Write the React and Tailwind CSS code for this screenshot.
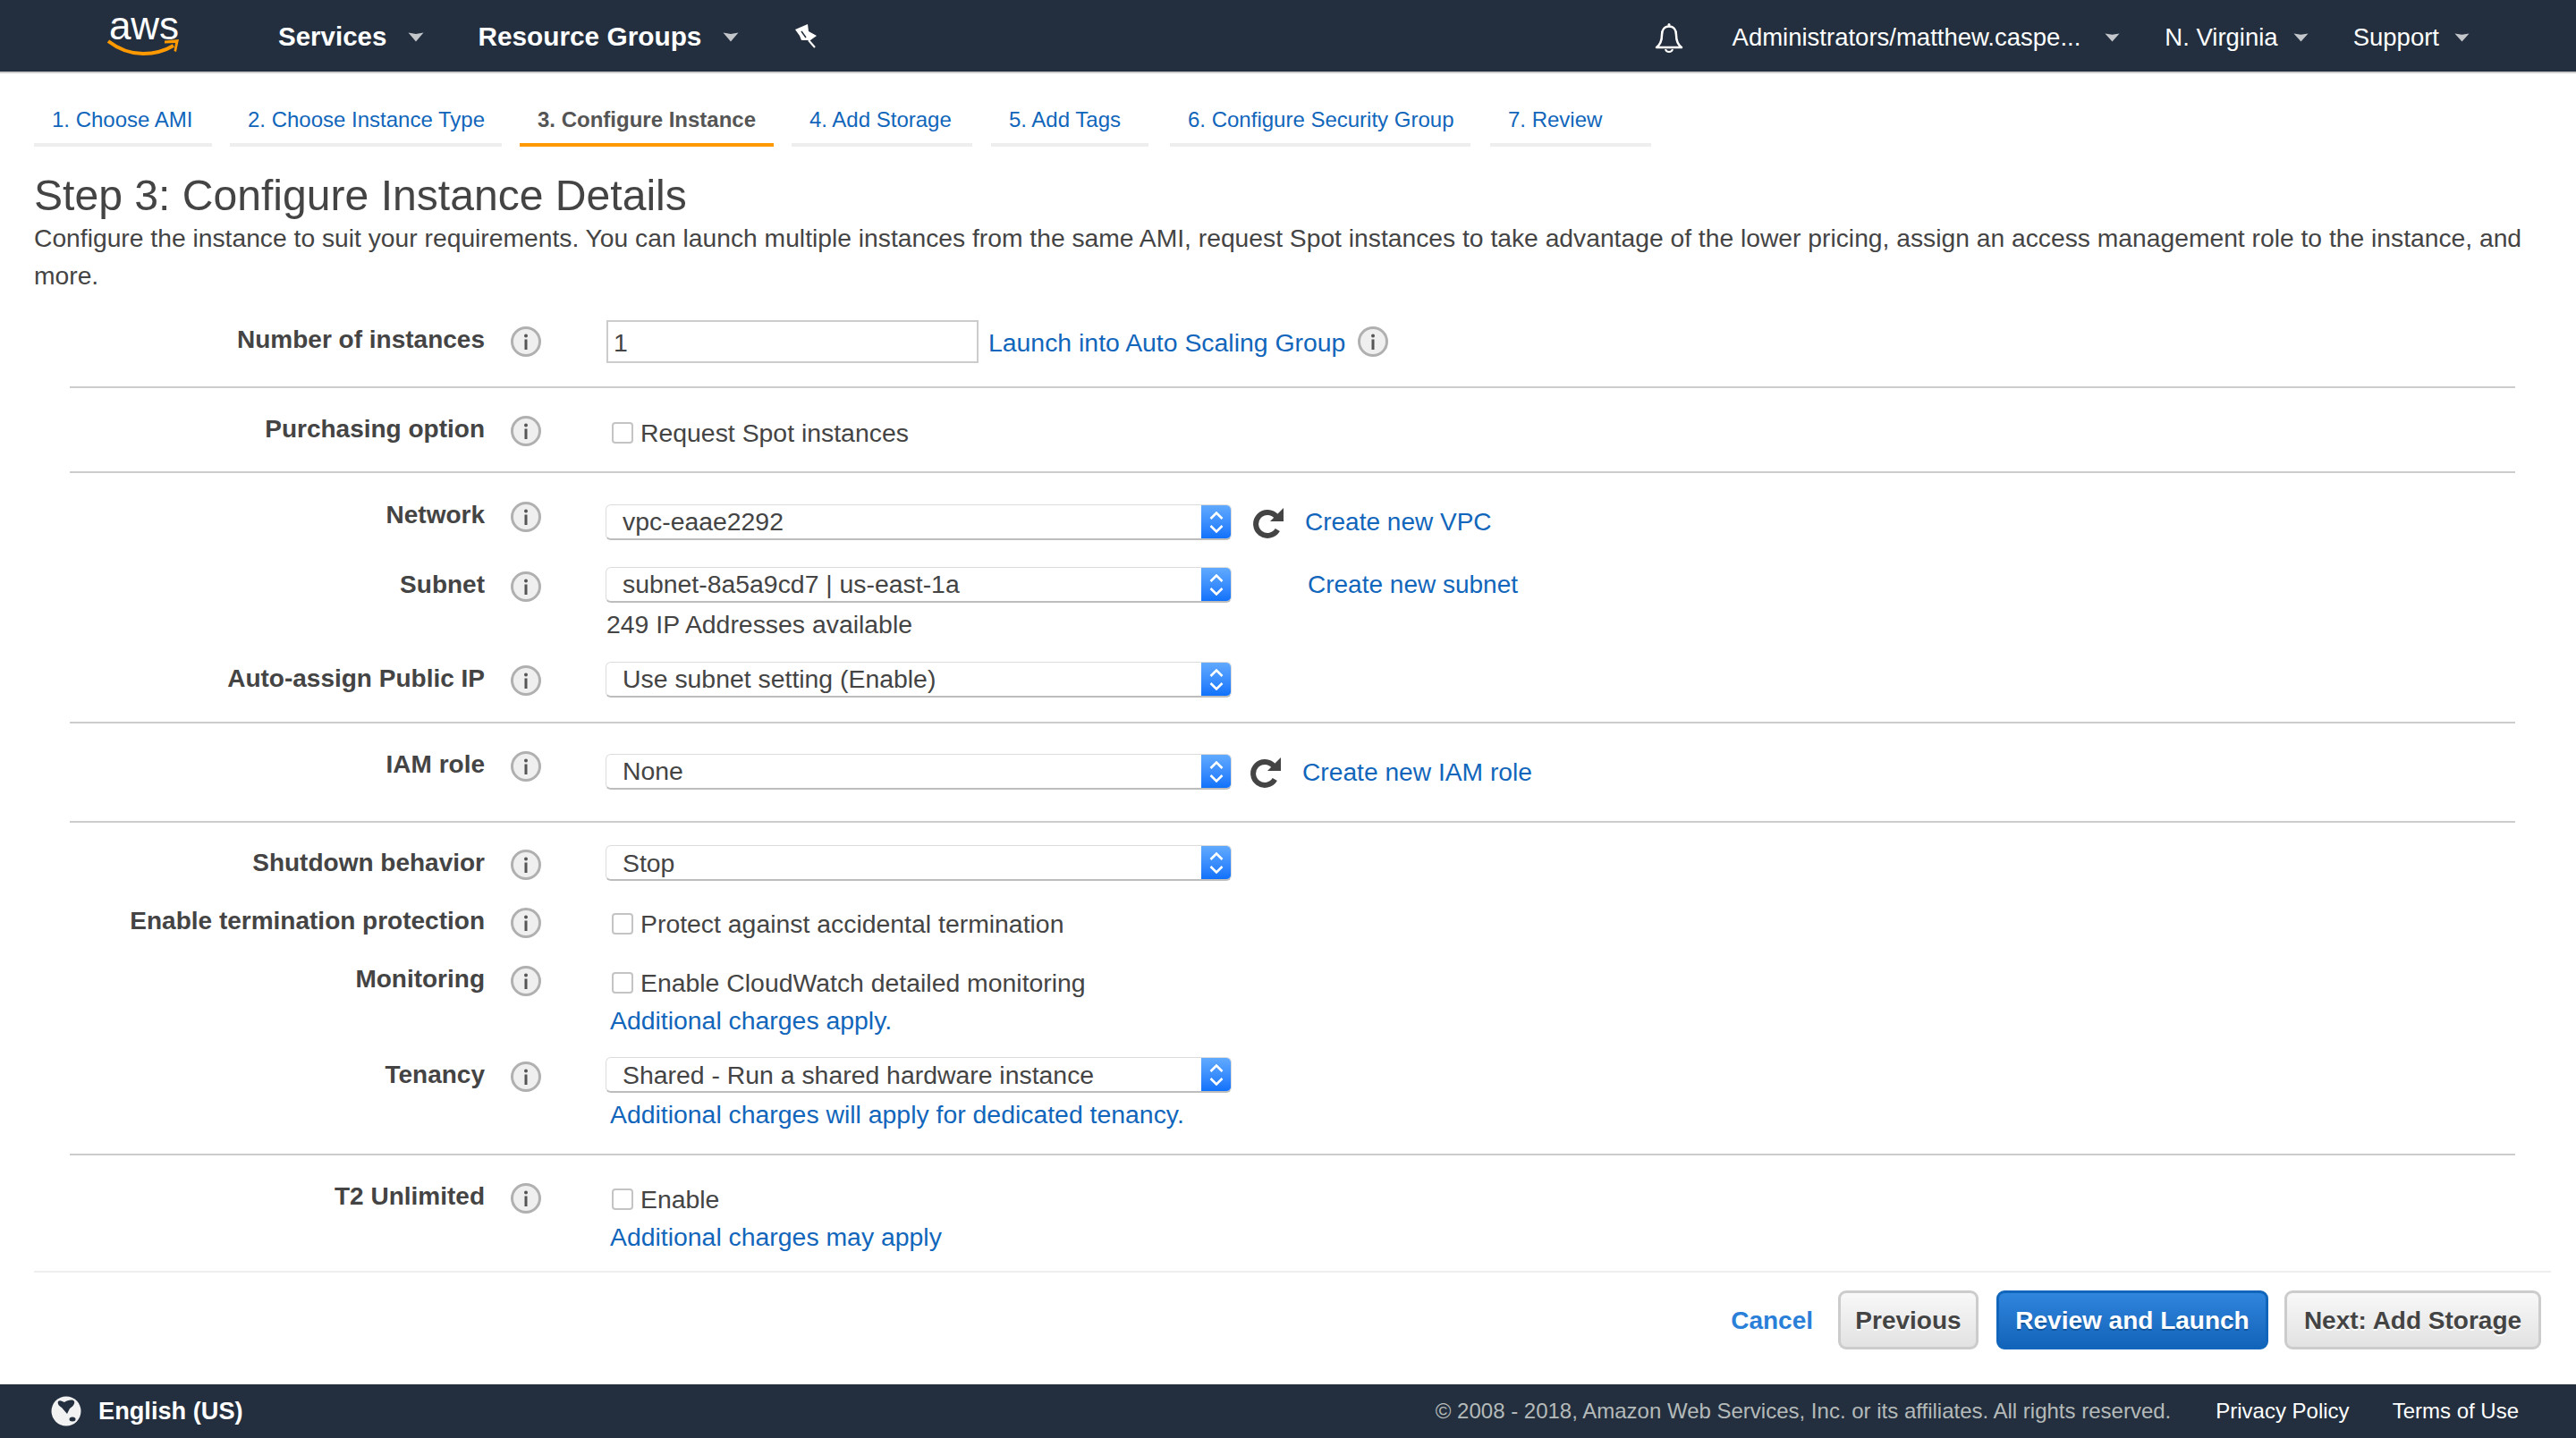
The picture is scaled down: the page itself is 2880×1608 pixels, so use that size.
import React from "react";

const Caret = ({ w = 17, h = 10 }) => (
  <svg width={w} height={h} viewBox="0 0 18 11" preserveAspectRatio="none" className="shrink-0">
    <path d="M.5.5 9 2 17.500.5 9 10.500z" fill="#c3c6ca" />
  </svg>
);

const Info = () => (
  <svg width="34" height="34" viewBox="0 0 34 34" className="shrink-0">
    <circle cx="17" cy="17" r="15.500" fill="#efefef" stroke="#b0b0b0" strokeWidth="3" />
    <circle cx="17" cy="10.500" r="2" fill="#555" />
    <rect x="15.500" y="14.500" width="3" height="11.500" fill="#555" />
  </svg>
);

const Refresh = () => (
  <svg width="36" height="36" viewBox="0 0 36 36" className="shrink-0">
    <path d="M28.300 26.500A13 13 0 1 1 27 11.500" fill="none" stroke="#444" strokeWidth="6" />
    <path d="M35 2v15H20z" fill="#444" />
  </svg>
);

const Check = ({ children }) => (
  <label className="flex items-center h-[34px]">
    <span className="w-[24px] h-[24px] ml-[6px] mr-[8px] rounded-[4px] border-2 border-[#c4c4c4] bg-white shrink-0" />
    {children}
  </label>
);

const A = ({ children, className = "" }) => (
  <a className={`text-[#1166bb] ${className}`}>{children}</a>
);

const Select = ({ value }) => (
  <div className="flex w-[700px] -ml-[1px] h-[40px] rounded-[6px] bg-white border border-[#dcdcdc] border-b-2 border-b-[#bdbdbd] overflow-hidden">
    <div className="flex-1 flex items-center pl-[18px]">{value}</div>
    <div className="w-[33px] -my-[1px] flex items-center justify-center bg-gradient-to-b from-[#62abff] to-[#0b70fb]">
      <svg width="16" height="24" viewBox="0 0 16 24">
        <path d="M1.500 8 8 1.500 14.500 8M1.500 16 8 22.500 14.500 16" fill="none" stroke="#fff" strokeWidth="2.500" />
      </svg>
    </div>
  </div>
);

const Row = ({ label, lc = "", fc = "", className = "", children }) => (
  <div className={`flex ${className}`}>
    <div className={`flex items-center h-[36px] shrink-0 ${lc}`}>
      <div className="w-[464px] text-right text-[28px] font-bold mb-[4px] leading-none">{label}</div>
      <div className="ml-[29px] mr-[73px]"><Info /></div>
    </div>
    <div className={`flex-1 ${fc}`}>{children}</div>
  </div>
);

const Section = ({ className = "", children }) => (
  <div className={`border-b-2 border-[#cccccc] ${className}`}>{children}</div>
);

const Tab = ({ children, active, className = "" }) => (
  <div
    className={`h-[50px] border-b-4 pl-[20px] pt-[2px] whitespace-nowrap ${
      active ? "border-[#ff9900] text-[#555] font-bold" : "border-[#eeeeee] text-[#1166bb]"
    } ${className}`}
  >
    {children}
  </div>
);

const Btn = ({ className = "", children }) => (
  <button
    className={`h-[66px] pt-[1px] rounded-[9px] border-[3px] font-bold flex items-center justify-center ${className}`}
  >
    {children}
  </button>
);

export default function App() {
  return (
    <div className="min-h-screen flex flex-col bg-white text-[#444] text-[28.4px] font-['Liberation_Sans',Arial,sans-serif]">
      {/* top nav */}
      <header className="h-[82px] pt-[3px] bg-[#232f3e] border-b-2 border-[#cccccc] flex items-center text-white text-[27.5px] shrink-0">
        <div className="ml-[120px] w-[82px] h-[47px] -mt-[5px] flex flex-col items-center">
          <span className="text-[44px] leading-[30px] font-normal -mt-[2px]">aws</span>
          <svg width="82" height="19" viewBox="0 0 82 19" className="-mt-[1px]">
            <path d="M1 3C14 13 26 17 40 17c13 0 24-3 34-9" fill="none" stroke="#ff9900" strokeWidth="4" />
            <path d="M64 2.500l16-1.500-3 14-2.500-1 1.500-9-12 .5z" fill="#ff9900" />
          </svg>
        </div>
        <span className="ml-[109px] font-bold text-[29.5px]">Services</span>
        <span className="ml-[24px]"><Caret w={18} h={11} /></span>
        <span className="ml-[60px] font-bold text-[29.8px]">Resource Groups</span>
        <span className="ml-[24px]"><Caret w={18} h={11} /></span>
        <svg width="30" height="30" viewBox="15 15 30 30" className="ml-[60px] mb-[3px]">
          <path d="M18 23 32 17l1 8 9 5-7 5H25l-2-5z" fill="#fff" />
          <path d="M33 35l7 8" stroke="#fff" strokeWidth="2" />
          <path d="M25 25l5 7" stroke="#232f3e" strokeWidth="1.500" />
        </svg>
        <div className="flex-1" />
        <svg width="34" height="36" viewBox="0 0 34 36" className="mr-[54px]">
          <circle cx="17" cy="3.500" r="1.500" fill="#fff" />
          <path d="M3 29C7 26 9 22 9 15 9 9 12 5.500 17 5.500S25 9 25 15C25 22 27 26 31 29Z" fill="none" stroke="#fff" strokeWidth="2.500" strokeLinejoin="round" />
          <path d="M13 31c1 4 7 4 8 0" fill="none" stroke="#fff" strokeWidth="2" />
        </svg>
        <span>Administrators/matthew.caspe...</span>
        <span className="ml-[27px]"><Caret /></span>
        <span className="ml-[50px]">N. Virginia</span>
        <span className="ml-[17px]"><Caret /></span>
        <span className="ml-[50px]">Support</span>
        <span className="ml-[17px] mr-[119px]"><Caret /></span>
      </header>

      {/* wizard tabs */}
      <nav className="flex pl-[38px] mt-[32px] text-[24px]">
        <Tab className="w-[199px]">1. Choose AMI</Tab>
        <Tab className="w-[304px] ml-[20px]">2. Choose Instance Type</Tab>
        <Tab className="w-[284px] ml-[20px]" active>3. Configure Instance</Tab>
        <Tab className="w-[202px] ml-[20px]">4. Add Storage</Tab>
        <Tab className="w-[176px] ml-[21px]">5. Add Tags</Tab>
        <Tab className="w-[336px] ml-[24px]">6. Configure Security Group</Tab>
        <Tab className="w-[180px] ml-[22px]">7. Review</Tab>
      </nav>

      <main className="px-[38px]">
        <h1 className="text-[48.1px] leading-[56px] mt-[26px]">Step 3: Configure Instance Details</h1>
        <p className="text-[28.25px] leading-[42px] -mt-[1px] w-[2830px]">
          Configure the instance to suit your requirements. You can launch multiple instances from the same AMI, request Spot instances to take advantage of the lower pricing, assign an access management role to the instance, and more.
        </p>

        <form className="ml-[40px] mr-[30px]">
          <Section className="pt-[29px] pb-[26px]">
            <Row label="Number of instances" lc="mt-[6px]">
              <div className="flex items-center">
                <div className="w-[416px] h-[48px] border-2 border-[#cccccc] flex items-center pl-[6px] pt-[2px]">1</div>
                <A className="ml-[11px] mt-[2px]">Launch into Auto Scaling Group</A>
                <span className="ml-[14px]"><Info /></span>
              </div>
            </Row>
          </Section>

          <Section className="pt-[30px] pb-[26px]">
            <Row label="Purchasing option" fc="mt-[3px]">
              <Check>Request Spot instances</Check>
            </Row>
          </Section>

          <Section className="pt-[31px] pb-[27px]">
            <Row label="Network" fc="mt-[3px]">
              <div className="flex items-center">
                <Select value="vpc-eaae2292" />
                <span className="ml-[23px]"><Refresh /></span>
                <A className="ml-[23px] text-[28px]">Create new VPC</A>
              </div>
            </Row>
            <Row label="Subnet" lc="mt-[5px]" className="mt-[28px]">
              <div className="flex items-center">
                <Select value="subnet-8a5a9cd7 | us-east-1a" />
                <A className="ml-[85px] text-[28px]">Create new subnet</A>
              </div>
              <div className="mt-[6px] leading-[34px]">249 IP Addresses available</div>
            </Row>
            <Row label="Auto-assign Public IP" lc="mt-[3px]" className="mt-[25px]">
              <Select value="Use subnet setting (Enable)" />
            </Row>
          </Section>

          <Section className="pt-[29px] pb-[34px]">
            <Row label="IAM role" lc="mt-[1px]" fc="mt-[4px]">
              <div className="flex items-center">
                <Select value="None" />
                <span className="ml-[20px]"><Refresh /></span>
                <A className="ml-[23px] text-[28.2px]">Create new IAM role</A>
              </div>
            </Row>
          </Section>

          <Section className="pt-[25px] pb-[27px]">
            <Row label="Shutdown behavior" lc="mt-[4px]">
              <Select value="Stop" />
            </Row>
            <Row label="Enable termination protection" fc="mt-[2px]" className="mt-[29px]">
              <Check>Protect against accidental termination</Check>
            </Row>
            <Row label="Monitoring" fc="mt-[3px]" className="mt-[29px]">
              <Check>Enable CloudWatch detailed monitoring</Check>
              <A className="block mt-[8px] ml-[4px] leading-[34px]">Additional charges apply.</A>
            </Row>
            <Row label="Tenancy" lc="mt-[4px]" className="mt-[24px]">
              <Select value="Shared - Run a shared hardware instance" />
              <A className="block mt-[7px] ml-[4px] leading-[34px]">Additional charges will apply for dedicated tenancy.</A>
            </Row>
          </Section>

          <div className="pt-[30px]">
            <Row label="T2 Unlimited" fc="mt-[2px]">
              <Check>Enable</Check>
              <A className="block mt-[8px] ml-[4px] leading-[34px]">Additional charges may apply</A>
            </Row>
          </div>
        </form>
      </main>

      {/* wizard buttons */}
      <div className="ml-[38px] w-[2814px] mt-[21px] border-t-2 border-[#eeeeee] pt-[20px] flex items-center justify-end text-[28px]">
        <a className="text-[#2a7fd8] font-bold mr-[28px] pt-[2px]">Cancel</a>
        <Btn className="w-[157px] mr-[20px] border-[#cccccc] bg-gradient-to-b from-[#f8f8f8] to-[#e2e2e2] text-[#444] [text-shadow:0_2px_0_#fff]">Previous</Btn>
        <Btn className="w-[304px] mr-[18px] border-[#1166bb] bg-gradient-to-b from-[#3085dc] to-[#1264ba] text-white [text-shadow:0_2px_0_#10559c]">Review and Launch</Btn>
        <Btn className="w-[287px] mr-[11px] border-[#cccccc] bg-gradient-to-b from-[#f8f8f8] to-[#e2e2e2] text-[#444] [text-shadow:0_2px_0_#fff]">Next: Add Storage</Btn>
      </div>

      {/* footer */}
      <footer className="mt-auto h-[60px] bg-[#232f3e] flex items-center shrink-0 text-[24px] text-white">
        <svg width="34" height="34" viewBox="0 0 34 34" className="ml-[57px]">
          <circle cx="17" cy="17" r="16.500" fill="#f2f2f2" />
          <path d="M8 6C10 4 13 6 15 7 18 5 24 3 26 6 27 9 24 12 21 14 20 16 19 18 18 20 16 18 14 15 12 13 9 11 7 9 8 6Z" fill="#232f3e" />
          <ellipse cx="24" cy="26" rx="3.500" ry="2.500" fill="#232f3e" />
        </svg>
        <span className="ml-[19px] font-bold text-[27.2px]">English (US)</span>
        <div className="flex-1" />
        <span className="text-[#b4bab9]">© 2008 - 2018, Amazon Web Services, Inc. or its affiliates. All rights reserved.</span>
        <span className="ml-[50px]">Privacy Policy</span>
        <span className="ml-[48px] mr-[64px]">Terms of Use</span>
      </footer>
    </div>
  );
}
